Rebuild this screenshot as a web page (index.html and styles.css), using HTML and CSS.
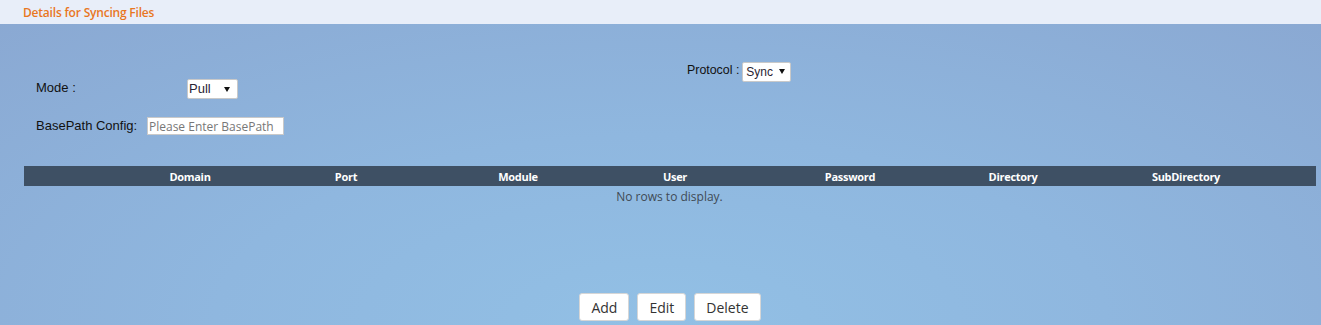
FILE: index.html
```
<!DOCTYPE html>
<html lang="en">
<head>
    <meta charset="UTF-8">
    <title>Details for Syncing Files</title>
    <link rel="stylesheet" href="styles.css">
</head>
<body>

    <div class="header">
        <span class="title">Details for Syncing Files</span>
    </div>

    <div class="panel">

        <div class="settings">
            <div class="left">
                <div class="row moderow">
                    <label class="lbl modelbl" for="mode">Mode :</label>
                    <div class="selectbox pull">
                        <select id="mode">
                            <option>Pull</option>
                            <option>Push</option>
                        </select>
                    </div>
                </div>
                <div class="row">
                    <label class="lbl baselbl" for="basepath">BasePath Config:</label>
                    <input class="inputfield" type="text" id="basepath" placeholder="Please Enter BasePath" autocomplete="off">
                </div>
            </div>

            <div class="right">
                <label class="lbl protolbl" for="protocol">Protocol :</label>
                <div class="selectbox sync">
                    <select id="protocol">
                        <option>Sync</option>
                        <option>Rsync</option>
                    </select>
                </div>
            </div>
        </div>

        <div class="grid">
            <div class="gridhead">
                <span></span>
                <span>Domain</span>
                <span>Port</span>
                <span>Module</span>
                <span>User</span>
                <span>Password</span>
                <span>Directory</span>
                <span>SubDirectory</span>
                <span></span>
            </div>
            <div class="gridbody">
                <p class="norows">No rows to display.</p>
            </div>
        </div>

        <div class="actions">
            <button class="btn" type="button">Add</button>
            <button class="btn" type="button">Edit</button>
            <button class="btn" type="button">Delete</button>
        </div>

    </div>

</body>
</html>
```

FILE: styles.css
```
* {
    box-sizing: border-box;
    margin: 0;
}

body {
    font-family: 'Open Sans', sans-serif;
    width: 1321px;
    height: 325px;
    overflow: hidden;
    background-color: #8fb6de;
}

.header {
    height: 24px;
    background-color: #e8eef9;
    padding-left: 23px;
    display: flex;
    align-items: center;
}

.title {
    color: #e8771f;
    font-size: 12px;
    font-weight: 600;
    letter-spacing: -0.2px;
}

.panel {
    height: 301px;
    padding: 38px 5px 0 24px;
    background: radial-gradient(ellipse 75% 140% at 50% 100%, #92c0e5 0%, #8fb7df 45%, #8aa8d2 100%);
}

/* top form area */

.settings {
    display: flex;
    height: 73px;
}

.left {
    width: 663px;
    padding: 17px 0 0 12px;
}

.row {
    display: flex;
    align-items: center;
}

.moderow {
    height: 20px;
    margin-bottom: 18px;
}

.lbl {
    font-family: 'Liberation Sans', Arial, sans-serif;
    font-size: 13px;
    color: #111;
}

.modelbl {
    width: 151px;
    position: relative;
    top: -2px;
}

.baselbl {
    width: 111px;
    position: relative;
    top: -1px;
}

.right {
    display: flex;
    align-items: center;
    height: 20px;
    gap: 3px;
}

.protolbl {
    font-size: 12.4px;
    position: relative;
    top: -2px;
}

.selectbox {
    position: relative;
    height: 20px;
    background-color: #fff;
    border: 1px solid #c9c9c9;
    border-radius: 2px;
}

/* small black arrow like the native one */
.selectbox::after {
    content: "";
    position: absolute;
    right: 7px;
    top: 7px;
    border-left: 3px solid transparent;
    border-right: 3px solid transparent;
    border-top: 5px solid #111;
    pointer-events: none;
}

.selectbox select {
    display: block;
    appearance: none;
    -webkit-appearance: none;
    border: none;
    background: transparent;
    outline: none;
    height: 18px;
    line-height: 18px;
    padding: 0 0 0 1px;
    font-family: 'Liberation Sans', Arial, sans-serif;
    font-size: 13px;
    color: #2a2433;
    width: 100%;
}

.pull {
    width: 51px;
}

.sync {
    width: 49px;
}

.sync select {
    font-size: 12px;
    padding-left: 3px;
}

.sync::after {
    right: 5px;
    top: 6px;
}

.inputfield {
    width: 137px;
    height: 18px;
    border: 1px solid #c9c9c9;
    background-color: #fff;
    padding: 0 1px;
    font-family: 'Open Sans', sans-serif;
    font-size: 12px;
    outline: none;
}

.inputfield::placeholder {
    color: #777;
}

/* grid */

.grid {
    margin-top: 31px;
}

.gridhead {
    display: grid;
    grid-template-columns: 88px 156px 156px 188px 126px 224px 102px 244px 1fr;
    height: 20px;
    align-items: center;
    background-color: #3e5064;
    color: #fff;
    font-size: 11px;
    font-weight: 700;
    text-align: center;
    letter-spacing: -0.3px;
}

.gridbody {
    height: 95px;
}

.norows {
    text-align: center;
    font-size: 12px;
    color: #3f4a55;
    padding: 2px 0 0 0;
    margin-right: 1px;
}

/* buttons */

.actions {
    display: flex;
    justify-content: center;
    gap: 8px;
    padding-top: 12px;
}

.btn {
    height: 28px;
    padding: 0 11px;
    background-color: #fff;
    border: 1px solid #d6d6d6;
    border-radius: 3px;
    font-family: 'Open Sans', sans-serif;
    font-size: 14px;
    color: #333;
    cursor: pointer;
}
```
